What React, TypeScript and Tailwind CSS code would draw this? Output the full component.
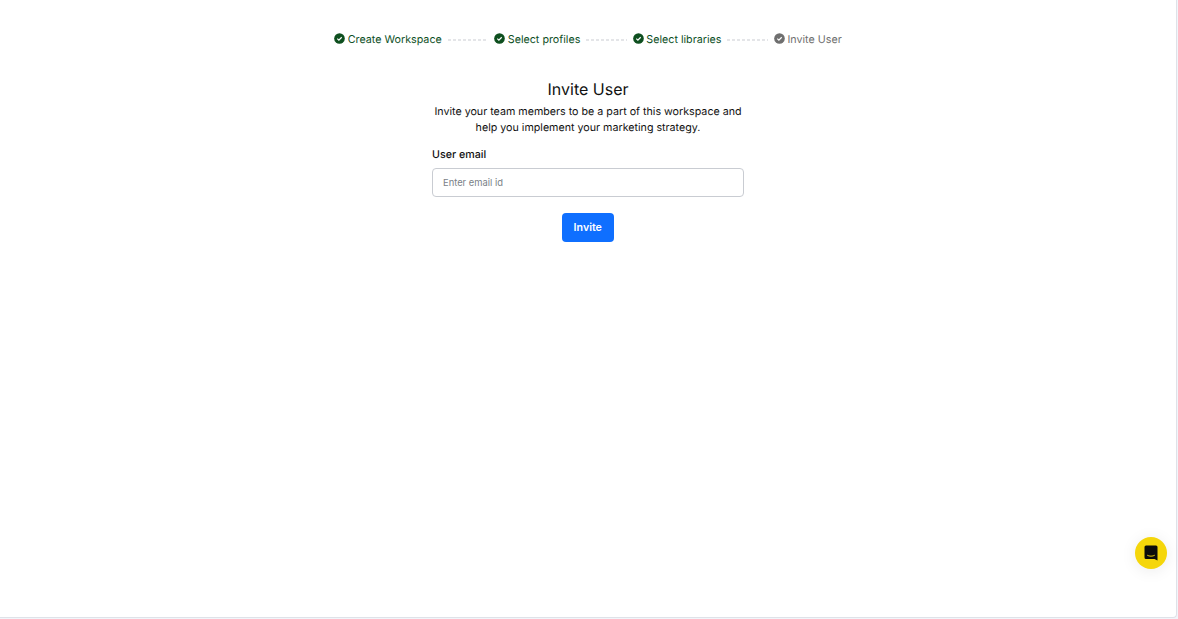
const steps = [
  { label: 'Create Workspace', done: true },
  { label: 'Select profiles', done: true },
  { label: 'Select libraries', done: true },
  { label: 'Invite User', done: false },
]

function StepIcon({ done }: { done: boolean }) {
  return (
    <svg viewBox="0 0 12 12" className="mb-[3px] size-[11px] shrink-0">
      <circle cx="6" cy="6" r="5.8" fill={done ? '#0e4f1f' : '#6f6f6f'} />
      <path d="M3.6 6.2 5.3 7.8 8.4 4.6" fill="none" stroke="#fff" strokeWidth="1.3" />
    </svg>
  )
}

export default function App() {
  return (
    <div className="h-[619px] w-[1178px] overflow-hidden bg-[#f2f5fa] font-['Inter',sans-serif] [text-rendering:geometricPrecision]">
      <div className="relative h-[618px] w-[1177px] rounded-br-[4px] border-r border-b border-[#dfe2e8] bg-white">
        <div className="flex justify-center pt-[33px]">
          <div className="flex h-[14px] items-center">
            {steps.map((step, i) => (
              <div key={step.label} className="flex items-center">
                <StepIcon done={step.done} />
                <span
                  className={`ml-[2.5px] text-[10.72px] leading-[14px] whitespace-nowrap ${
                    step.done ? 'text-[#0e4f1f]' : 'text-[#6f6f6f]'
                  }`}
                >
                  {step.label}
                </span>
                {i < steps.length - 1 && (
                  <div className="mx-[6px] h-[2px] w-[40.5px] bg-[repeating-linear-gradient(90deg,#e4e5e8_0,#e4e5e8_3px,transparent_3px,transparent_5px)]" />
                )}
              </div>
            ))}
          </div>
        </div>

        <div className="mx-auto mt-[32px] flex w-[312px] flex-col">
          <h1 className="text-center text-[16px] leading-[20px] text-[#111111]">Invite User</h1>
          <p className="mt-[5px] text-center text-[10.7px] leading-[16px] text-[#111111]">
            Invite your team members to be a part of this workspace and
            <br />
            help you implement your marketing strategy.
          </p>
          <label className="mt-[11px] text-[10.7px] leading-[16px] font-medium text-[#111111]">
            User email
          </label>
          <input
            placeholder="Enter email id"
            className="mt-[5px] h-[29px] w-[312px] rounded-[4px] border border-[#c9ccd2] bg-white px-[10px] text-[9.4px] outline-none placeholder:text-[#7a7f87]"
          />
          <button className="mx-auto mt-[16px] h-[29px] w-[52px] rounded-[4px] bg-[#0f6fff] pr-[0.5px] text-[10.67px] font-semibold text-white">
            Invite
          </button>
        </div>

        <button className="absolute top-[537px] left-[1135px] flex size-[32px] items-center justify-center rounded-full bg-[#f5d60a] shadow-[0_2px_16px_rgba(0,0,0,0.08)]">
          <svg viewBox="0 0 14 16" className="h-[16px] w-[14px]">
            <path d="M2 0.5h10a1.5 1.5 0 0 1 1.5 1.5v13.5l-3-1.5H2A1.5 1.5 0 0 1 .5 12.5V2A1.5 1.5 0 0 1 2 .5Z" fill="#0b0b0b" />
            <path d="M3.2 10.2c2 1.3 5.6 1.3 7.6 0" fill="none" stroke="#f5d60a" strokeWidth="0.9" />
          </svg>
        </button>
      </div>
    </div>
  )
}
